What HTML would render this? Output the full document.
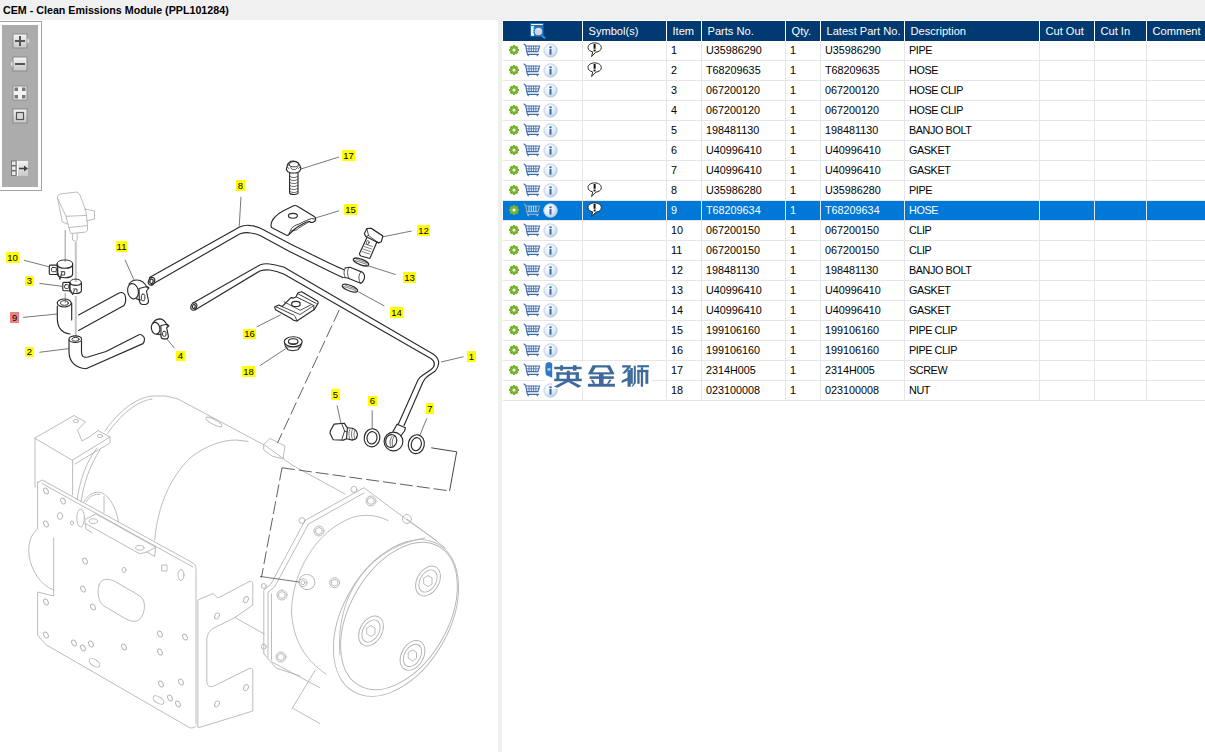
<!DOCTYPE html><html><head><meta charset="utf-8"><style>
*{margin:0;padding:0;box-sizing:border-box}
html,body{width:1205px;height:752px;overflow:hidden;background:#f0f0f0;font-family:"Liberation Sans",sans-serif}
.abs{position:absolute}
#title{position:absolute;left:3px;top:3px;font-weight:bold;font-size:10.7px;color:#000;white-space:nowrap;line-height:14px}
#left{position:absolute;left:0;top:20px;width:498px;height:732px;background:#fff;overflow:hidden}
#right{position:absolute;left:502px;top:20px;width:703px;height:732px;background:#fff;overflow:hidden}
.hd{position:absolute;top:21px;height:20px;background:#003a70;color:#fff;font-size:11.1px;line-height:20px;padding-left:5px;white-space:nowrap}
.cl{position:absolute;font-size:10.8px;line-height:19px;height:19px;padding-left:5px;white-space:nowrap;color:#000}
.hl{position:absolute;height:1px;background:#e6e6e6}
.vl{position:absolute;width:1px;background:#e6e6e6}
.ic{position:absolute}
</style></head><body>
<svg width="0" height="0" style="position:absolute"><defs>
<g id="gear"><path d="M9.48 4.73 L11.01 5.03 L11.01 6.97 L9.48 7.27 L9.35 7.56 L10.23 8.85 L8.85 10.23 L7.56 9.35 L7.27 9.48 L6.97 11.01 L5.03 11.01 L4.73 9.48 L4.44 9.35 L3.15 10.23 L1.77 8.85 L2.65 7.56 L2.52 7.27 L0.99 6.97 L0.99 5.03 L2.52 4.73 L2.65 4.44 L1.77 3.15 L3.15 1.77 L4.44 2.65 L4.73 2.52 L5.03 0.99 L6.97 0.99 L7.27 2.52 L7.56 2.65 L8.85 1.77 L10.23 3.15 L9.35 4.44 Z" fill="#79b22e"/><circle cx="6" cy="6" r="3.9" fill="#79b22e"/><circle cx="6" cy="6" r="1.5" fill="#fff"/></g>
<linearGradient id="ig" x1="0" y1="0" x2="1" y2="1"><stop offset="0" stop-color="#ffffff"/><stop offset="1" stop-color="#a9c4e0"/></linearGradient>
<radialGradient id="ig2" cx="0.35" cy="0.3" r="0.8"><stop offset="0" stop-color="#ffffff"/><stop offset="0.6" stop-color="#dfe9f4"/><stop offset="1" stop-color="#a8c4e2"/></radialGradient>
<g id="info"><circle cx="7.5" cy="7.5" r="7" fill="url(#ig2)"/><circle cx="7.5" cy="7.5" r="6.6" fill="none" stroke="#b9d0e8" stroke-width="0.8"/>
<rect x="6.4" y="3.4" width="2.2" height="1.8" fill="#3a65a6"/><rect x="6.5" y="6" width="2" height="5.6" fill="#3a65a6"/></g>
<g id="cart" fill="none" stroke="#3f6ea8" stroke-width="1.1" stroke-linecap="round" stroke-linejoin="round">
<path d="M1 1 L2.6 2.2 L4.4 11.4 L15.5 11.4"/><path d="M2.8 3 L16.5 3 L15 8.6 L3.9 8.6"/>
<path d="M3.3 5.8 L15.8 5.8" stroke-width="0.8"/>
<path d="M6 3.3V8.3M8.3 3.3V8.3M10.6 3.3V8.3M12.9 3.3V8.3" stroke-width="0.9"/>
<circle cx="5.2" cy="12.6" r="0.8" fill="#2f8ae0" stroke="none"/><circle cx="14.3" cy="12.6" r="0.8" fill="#2f8ae0" stroke="none"/></g>
<g id="cart2" fill="none" stroke="#9aa6b4" stroke-width="1.1" stroke-linecap="round" stroke-linejoin="round">
<path d="M1 1 L2.6 2.2 L4.4 11.4 L15.5 11.4"/><path d="M2.8 3 L16.5 3 L15 8.6 L3.9 8.6"/>
<path d="M6 3.3V8.3M8.3 3.3V8.3M10.6 3.3V8.3M12.9 3.3V8.3" stroke="#e8eef4" stroke-width="0.9"/>
<circle cx="5.2" cy="12.6" r="0.8" fill="#9fd0ff" stroke="none"/><circle cx="14.3" cy="12.6" r="0.8" fill="#9fd0ff" stroke="none"/></g>
<g id="bub"><path d="M7.6 0.9 C11.5 0.9 14.3 2.9 14.3 5.6 C14.3 8.1 12 9.9 8.8 10.2 L4.6 14.6 L5.7 9.9 C3 9.3 1 7.7 1 5.6 C1 2.9 3.7 0.9 7.6 0.9 Z" fill="#fff" stroke="#2a2a20" stroke-width="1"/>
<rect x="6.6" y="2" width="2" height="4.8" fill="#111"/><rect x="6.6" y="7.6" width="2" height="1.8" fill="#111"/></g>
</defs></svg>
<div id="title">CEM - Clean Emissions Module (PPL101284)</div>
<div id="left">
<svg style="position:absolute;left:0;top:-20px" width="498" height="752" viewBox="0 0 498 752">
<!-- ===== housing (light gray) ===== -->
<g fill="none" stroke="#b4b4b4" stroke-width="0.9" stroke-linejoin="round" stroke-linecap="round">
 <!-- bracket top -->
 <path d="M35 438 L74 415.5 L85.5 422 L77.5 430 L82 441 L90 436.5 L98 430.5 L110 437 L72.6 460 Z"/>
 <path d="M35 438 L35 487 M72.6 460 L72.6 495 M110 437 L110 443 L75 464"/>
 <ellipse cx="76" cy="421" rx="2.6" ry="1.6"/><ellipse cx="100" cy="436" rx="2.6" ry="1.6"/>
 <!-- cylinder top / outline -->
 <path d="M105 431 C118 412 135 398 152 396 L166 396 L178 399 L266 446 L292 465 L345 494"/>
 <path d="M108 433 C120 415 137 401 152 399"/>
 <path d="M77 500 C80 480 86 462 97 448"/>
 <path d="M81 502 C84 482 90 465 100 450"/>
 <ellipse cx="214" cy="422" rx="9" ry="2.5" transform="rotate(28 214 422)"/>
 <!-- cylinder front rim -->
 <path d="M154.6 540 C158 505 170 478 190 458 C205 446 222 440 236 440 L248 441.4"/>
 <!-- fitting block on cylinder -->
 <path d="M264 444 L270 438.5 L285 446 L283 459 L272 456 L264 450 Z"/>
 <!-- plate -->
 <path d="M37.5 482.5 L42.3 480 L193 563 C196 565 196 568 196 570 L196 724"/>
 <path d="M37.6 482 L37.6 529 C30 535 28 545 29 555 C31 570 40 585 53.7 590 L53.7 596 L37.6 592 L37.6 635.4 L46 644.7 L189.3 727.5 C191.5 728.5 194 728 196 726"/>
 <path d="M53.7 538 L53.7 590"/>
 <path d="M99 585 C101 578 108 578 116 582 L140 596 C146 600 146 612 140 619 C137 622 132 622 126 619 L104 606 C98 602 97 592 99 585 Z"/>
 <path d="M85.3 519.5 L95.9 513.9 L155.8 547.2 L147 552 L139.8 553.8 L85.3 523.5 Z"/>
 <path d="M85.5 523.5 L86 529 L92 532.5 M147 552 L154.5 556.5 L155.8 547.2"/>
 <ellipse cx="93.3" cy="521.2" rx="4.2" ry="2.4"/><ellipse cx="139.8" cy="547.8" rx="4.2" ry="2.4"/>
 <path d="M42 483.5 L193 567"/>
 <ellipse cx="80.6" cy="518" rx="3.8" ry="9"/>
 <!-- plate holes -->
 <g>
 <ellipse cx="46" cy="491" rx="2.1" ry="3.2" transform="rotate(-28 46 491)"/><ellipse cx="63" cy="501" rx="2.1" ry="3.2" transform="rotate(-28 63 501)"/>
 <ellipse cx="60" cy="516" rx="2.6" ry="3.5"/><ellipse cx="46" cy="524" rx="2.1" ry="3.2" transform="rotate(-28 46 524)"/><ellipse cx="72" cy="523" rx="1.5" ry="2"/>
 <ellipse cx="85" cy="561" rx="2.1" ry="3.2" transform="rotate(-28 85 561)"/><ellipse cx="83" cy="589" rx="2.1" ry="3.2" transform="rotate(-28 83 589)"/><ellipse cx="93" cy="607" rx="2.1" ry="3.2" transform="rotate(-28 93 607)"/>
 <ellipse cx="46" cy="602" rx="2.1" ry="3.2" transform="rotate(-28 46 602)"/><ellipse cx="46" cy="635" rx="2.1" ry="3.2" transform="rotate(-28 46 635)"/>
 <ellipse cx="74" cy="643" rx="2.1" ry="3.2" transform="rotate(-28 74 643)"/><ellipse cx="83" cy="648" rx="2.1" ry="3.2" transform="rotate(-28 83 648)"/><ellipse cx="91" cy="644" rx="2.1" ry="3.2" transform="rotate(-28 91 644)"/>
 <ellipse cx="94.5" cy="662.8" rx="3.2" ry="6" transform="rotate(-58 94.5 662.8)"/>
 <ellipse cx="124" cy="647" rx="2.1" ry="3.2" transform="rotate(-28 124 647)"/><ellipse cx="160" cy="634" rx="2.1" ry="3.2" transform="rotate(-28 160 634)"/><ellipse cx="160" cy="652" rx="2.1" ry="3.2" transform="rotate(-28 160 652)"/>
 <ellipse cx="185" cy="637" rx="2.1" ry="3.2" transform="rotate(-28 185 637)"/><ellipse cx="161" cy="684" rx="2.1" ry="3.2" transform="rotate(-28 161 684)"/><ellipse cx="181" cy="682" rx="2.1" ry="3.2" transform="rotate(-28 181 682)"/>
 <ellipse cx="158.5" cy="700" rx="3.2" ry="6" transform="rotate(-58 158.5 700)"/><ellipse cx="170" cy="698" rx="2.1" ry="3.2" transform="rotate(-28 170 698)"/><ellipse cx="178" cy="704" rx="2.1" ry="3.2" transform="rotate(-28 178 704)"/>
 <ellipse cx="124" cy="570" rx="2" ry="2.6"/><rect x="162" y="565" width="5" height="6"/><ellipse cx="181" cy="575" rx="3" ry="5.5"/>
 
 </g>
 <!-- right bracket -->
 <path d="M197.9 727 L197.9 600 L213 593.5 L218 598 L249 581.7 C251 580.5 252.8 581.5 252.8 584 L252.8 605 L235 617.5 L213 628.5 C208 632 206.8 636 206.8 641 L206.8 681 C207 686 210 688 214 686 L249 668.6 C251 667.5 252.8 668.5 252.8 671 L252.8 711 L201 727 Z"/>
 <ellipse cx="246" cy="599.6" rx="2.2" ry="3.2" transform="rotate(25 246 599.6)"/><ellipse cx="217" cy="616" rx="2.2" ry="3.2" transform="rotate(25 217 616)"/>
 <ellipse cx="246" cy="687.7" rx="2.2" ry="3.2" transform="rotate(25 246 687.7)"/><ellipse cx="217" cy="704" rx="2.2" ry="3.2" transform="rotate(25 217 704)"/>
 <path d="M235 617.5 L264.3 634"/>
 <!-- motor hub behind plate -->
 <path d="M84 502 C88 494 95 491 101 492.6 C110 496 116 508 118.5 521.9"/><path d="M104 496.6 L104 512.6"/>
 <path d="M86.5 501.5 C90 495.5 95.5 493.5 100 494.5"/>
 <!-- flange plate -->
 <path d="M263.8 653.6 L263.8 590 L270.7 584.5 L305 520.5 L364 487.7 L405.6 518.8 L436.7 541"/>
 <path d="M268 657 L268 592 L274.5 587 L308.5 524 L364 493"/>
 <path d="M271.5 660 L271.5 594"/>
 <path d="M263.8 653.6 L276 668 L300 676"/>
 <!-- cylinder back -->
 <path d="M291.5 612 C291.5 575 315 530 353.7 517 C370 513 380 517 388 520.5"/>
 <path d="M291.5 612 C293 640 305 660 326 674"/>
 <path d="M407 519 L436.7 541 L445 548"/>
 <!-- end disc -->
 <ellipse cx="396" cy="618" rx="53" ry="85" transform="rotate(30 396 618)"/>
 <ellipse cx="399" cy="616" rx="49" ry="80" transform="rotate(30 399 616)"/>
 <path d="M340 655 C335 600 365 548 425 538"/>
 <!-- bolt heads on flange -->
 <g>
 <circle cx="371" cy="501" r="5"/><path d="M368 499 L371 497.5 L374 499 L374 503 L371 504.5 L368 503 Z"/>
 <circle cx="319" cy="531" r="5"/><path d="M316 529 L319 527.5 L322 529 L322 533 L319 534.5 L316 533 Z"/>
 <circle cx="282" cy="595" r="5"/><path d="M279 593 L282 591.5 L285 593 L285 597 L282 598.5 L279 597 Z"/>
 <circle cx="281" cy="657" r="5"/><path d="M278 655 L281 653.5 L284 655 L284 659 L281 660.5 L278 659 Z"/>
 <circle cx="407" cy="519" r="4.5"/><circle cx="334.7" cy="582.7" r="5"/><path d="M331.7 580.7 L334.7 579.2 L337.7 580.7 L337.7 584.7 L334.7 586.2 L331.7 584.7 Z"/>
 <ellipse cx="307" cy="582" rx="8" ry="7.5" transform="rotate(25 307 582)"/><circle cx="303" cy="582.7" r="4"/><circle cx="303" cy="582.7" r="2"/>
 <circle cx="354" cy="489.4" r="3"/><circle cx="302" cy="520.5" r="3"/><circle cx="263.8" cy="586" r="2.5"/><circle cx="263.8" cy="646.7" r="2.5"/>
 </g>
 <!-- nuts on disc -->
 <g>
 <ellipse cx="428" cy="581" rx="11" ry="16" transform="rotate(30 428 581)"/><ellipse cx="428" cy="581" rx="8" ry="12" transform="rotate(30 428 581)"/><path d="M424 578 L428 575.5 L432 578 L432 584 L428 586.5 L424 584 Z"/>
 <ellipse cx="371" cy="631" rx="11" ry="16" transform="rotate(30 371 631)"/><ellipse cx="371" cy="631" rx="8" ry="12" transform="rotate(30 371 631)"/><path d="M367 628 L371 625.5 L375 628 L375 634 L371 636.5 L367 634 Z"/>
 <ellipse cx="412.5" cy="655.4" rx="11" ry="16" transform="rotate(30 412.5 655.4)"/><ellipse cx="412.5" cy="655.4" rx="8" ry="12" transform="rotate(30 412.5 655.4)"/><path d="M408.5 652.4 L412.5 649.9 L416.5 652.4 L416.5 658.4 L412.5 660.9 L408.5 658.4 Z"/>
 </g>
 <!-- foot -->
 <path d="M292.4 708 L315.4 670 M292.4 708 L319.7 723.5 M272 662 L319.7 687.7"/>
 
 <!-- sensor -->
 <path d="M57.7 196 L60 194 L77 192 L80 195 L85.6 210 L86.5 215.4 L66 216.3 L57.7 198.6 Z"/>
 <path d="M57.7 198.6 L62.3 222 L68 224.2 L66 216.3"/>
 <path d="M86.5 215.4 L87.5 225.6 L68.9 227.5 L68 224.2"/>
 <path d="M68.9 227.5 L70.7 233.5 L85.6 232.1 L87.5 230.3 L87.5 225.6"/>
 <path d="M72.6 233.5 L72.6 240 L75.8 241.5 L77.2 240 L77.2 233.5"/>
 <path d="M84.7 209 L94.5 211 L94.5 219 L86.5 221"/>
</g>
<!-- rods -->
<g fill="none" stroke-linecap="butt">
 <path d="M65.2 230 L65.2 262" stroke="#999" stroke-width="1"/>
 <path d="M65.2 293 L65.2 303" stroke="#999" stroke-width="1"/>
 <path d="M75.8 242 L75.8 282 M75.8 296 L75.8 338" stroke="#c6c6c6" stroke-width="2"/>
</g>
<!-- ===== parts (dark) ===== -->
<g fill="none" stroke="#2a2a2a" stroke-width="1.15" stroke-linejoin="round" stroke-linecap="round">
 <!-- hose 9 -->
 <path d="M57.3 306 L57.3 318 C57.3 328 62 333 70 334"/>
 <ellipse cx="64.2" cy="303" rx="7" ry="4"/><ellipse cx="64.4" cy="303" rx="4" ry="2.4" stroke-width="0.9"/>
 <path d="M71.7 303 L71.7 320"/>
 <path d="M78.6 315 L118.6 293.3 C122 291.5 125 293 125.5 297 C126 301 125 304 124 305.4 L78.6 330.5"/>
 <!-- hose 2 -->
 <ellipse cx="75.3" cy="339.2" rx="6.3" ry="3.3"/><ellipse cx="75.5" cy="339.3" rx="3.6" ry="1.9" stroke-width="0.9"/>
 <path d="M69 340 L69 352 C69 362 76 368 86 368.7 L143 343.6 C145 341 145 337 142.9 336 C141 334 139 334.5 138 335.2 L106 351.5 L88 357 C83 358 81.5 356 81.5 352 L81.5 341"/>
 <!-- clip 10 -->
 <path d="M57.2 263.5 C57.2 261 61 260 65 260 C69 260 72.6 261 72.6 263.5" stroke-width="1"/>
 <path d="M57.2 265 C58 267.5 61.5 268.2 65 268.2 C68.5 268.2 72 267.5 72.6 265"/>
 <path d="M57.2 263.5 L57.2 274.5 C58.5 277 62 277.7 65 277.7 C68.5 277.7 72 277 72.6 274.5 L72.6 263.5"/>
 <path d="M50.3 265.1 L57.7 265.1 L57.7 274.5 L50.3 274.5 C49.5 274.5 49.3 274 49.3 273 L49.3 266.5 C49.3 265.5 49.7 265.1 50.3 265.1 Z"/>
 <rect x="51.6" y="267.5" width="4.7" height="4.2" rx="1" stroke-width="0.9"/>
 <path d="M57.7 272.6 L60 279.6 L61.9 272.1 M61 271.7 L64.7 271.7 L64.7 275 L61 275" stroke-width="0.9"/>
 <!-- clip 3 -->
 <path d="M69.8 282.5 C69.8 280.5 72.5 279.1 75.6 279.1 C78.7 279.1 81.4 280.5 81.4 282.5" stroke-width="1"/>
 <path d="M69.8 283.2 C71 284.8 73.5 285.3 75.6 285.3 C78 285.3 80.5 284.8 81.4 283.2"/>
 <path d="M69.8 282.5 L69.8 291 C71 293 73.5 293.5 75.6 293.5 C78 293.5 80.5 293 81.4 291 L81.4 282.5"/>
 <path d="M63.8 282.4 L69.8 282.4 L69.8 290.7 L63.8 290.7 C63.2 290.7 62.8 290.2 62.8 289.5 L62.8 283.5 C62.8 282.8 63.2 282.4 63.8 282.4 Z"/>
 <rect x="64.6" y="284.7" width="4.2" height="3.7" rx="1" stroke-width="0.9"/>
 <path d="M70.7 290 L72.6 295 L74.5 290 M73.5 289 L77 289 L77 292" stroke-width="0.9"/>
 <!-- clip 11 -->
 <ellipse cx="133" cy="291.2" rx="5.3" ry="7.7" transform="rotate(-12 133 291.2)"/>
 <path d="M129 284 C131 281 134 280 137 280 C141 280 145 283 147.5 288"/>
 <path d="M136 298.5 C138 299.5 139.5 300 140.5 300"/>
 <path d="M139 288.5 L147 286.5 L149 288 L146.5 291 L148.5 301 C148.5 303 147.5 304 145.5 304.5 L142.5 304.5 C140.5 304 139.3 302 139.3 300 Z"/>
 <rect x="141.4" y="294.2" width="3.4" height="6.6" rx="1.5" stroke-width="0.9"/>
 <!-- clip 4 -->
 <ellipse cx="155.6" cy="328.3" rx="4.2" ry="6" transform="rotate(-12 155.6 328.3)"/>
 <path d="M153 322.8 C155 320 158 318.9 160 318.9 C163 319 165.5 321.5 167.4 325.8"/>
 <path d="M157 333.7 C158 334.3 159.5 334.6 160.9 334.6"/>
 <path d="M160.9 325.5 L167.4 324.3 L168.9 325.8 L166.7 327.8 L168.4 336.3 C168.4 338 167.5 338.8 166 338.8 L163.4 338.8 C162 338.8 161 337.5 161 336 Z"/>
 <rect x="162.6" y="331.3" width="3.4" height="5" rx="1.3" stroke-width="0.9"/>
 <!-- pipe 8 -->
 <path d="M149.5 277.5 L239.6 227 C244 225 248 225 251 225.6 C255 226 258 227 261 228.5 L290 243.7 C315 256 330 264 343.9 269.7"/>
 <path d="M151 285 L239.6 234 C244 232.5 248 232.5 251 233 C255 233.5 258 234.5 261 236 L290 251.7 C315 264 330 272 343 277.6"/>
 <ellipse cx="151.5" cy="281.3" rx="3" ry="4" transform="rotate(20 151.5 281.3)"/>
 <ellipse cx="151.5" cy="281.3" rx="1.6" ry="2.2" transform="rotate(20 151.5 281.3)"/>
 <!-- pipe 8 end fitting -->
 <path d="M345 268 L349.9 267.3 L362.1 272.1 C364.5 273.5 365 277 364.3 278.5 C363.5 281 362 283 360.5 283.3 L347.8 278 L344 277.5"/>
 <path d="M345.5 268 C343.5 270 343.5 275 345.5 277.6" stroke-width="0.8"/>
 <path d="M349 267.5 C347 270 347 275 349 278.2" stroke-width="0.8"/>
 <path d="M361 272 C358.5 274 358 279.5 360.5 283.3" stroke-width="0.8"/>
 <!-- pipe 1 -->
 <path d="M193 303 L259.8 265 C263 263.8 267 263.5 270 264 C274 264.5 278 265.5 283.7 267 L433 354 C439 358 441 364 435.3 371 L428 376 C425 378 424 380 423 382 L404 425.5"/>
 <path d="M195 310 L259.8 271 C263 270 267 269.7 270 270 C274 270.5 278 271.5 283.7 274 L430.8 358.5 C435 361 436 366 430.8 369.8 L423 375 C420 377 419 378 418 380 L398 424.7"/>
 <ellipse cx="193.8" cy="306.5" rx="2.8" ry="3.8" transform="rotate(20 193.8 306.5)"/>
 <ellipse cx="193.8" cy="306.5" rx="1.4" ry="2" transform="rotate(20 193.8 306.5)"/>
 <!-- banjo eye -->
 <path d="M397.1 424.3 L405.4 427.8 L404.5 431 L400.8 436"/>
 <path d="M397.1 424.3 L393 431.4"/>
 <ellipse cx="393.5" cy="441.5" rx="9.4" ry="9.4"/>
 <ellipse cx="391.2" cy="441" rx="5.5" ry="6.5" transform="rotate(15 391.2 441)"/>
 <path d="M394.5 436 C392 439 391.5 444 393 447 M392 436.5 C389.5 440 389.5 444 391 446.5" stroke-width="0.7"/>
 <!-- gaskets 6,7 -->
 <ellipse cx="372" cy="437.8" rx="7.8" ry="9.1" transform="rotate(10 372 437.8)"/>
 <ellipse cx="372" cy="437.8" rx="5" ry="6.2" transform="rotate(10 372 437.8)"/>
 <ellipse cx="416.3" cy="444.2" rx="8" ry="9.5" transform="rotate(12 416.3 444.2)"/>
 <ellipse cx="416.3" cy="444.2" rx="5" ry="6.6" transform="rotate(12 416.3 444.2)"/>
 <!-- bolt 5 -->
 <path d="M330.5 430.5 L334.1 424.1 L344.2 423.2 L347.4 427.8 L346.5 438.7 L343.3 440.1 L333.2 439.7 L330 433.3 Z"/>
 <path d="M341.9 424.1 L344.6 431 L341.9 439.2 M344.6 431 L347.2 432" stroke-width="0.9"/>
 <path d="M347.4 427.8 L352.4 428.2 C355 429 357 431.5 357.4 434.2 C357.4 436.5 356.5 438 356 438.7 L352.4 440.1 L346.5 438.7"/>
 <path d="M350 429 C348.5 432 348.5 436 350 439.5 M352.5 429 C351 432 351 436 352.5 439.6 M355 430 C353.5 432.5 353.5 436 355 439" stroke-width="0.6"/>
 <!-- bolt 17 -->
 <path d="M286.6 168.2 L287.8 164 L290.5 161.3 L293.8 161 L298 162.5 L300 165.8 L301 168.8 L299.2 171.8 L296.2 173 L290.8 173 L287.8 171.8 L286.3 169.4 Z"/>
 <path d="M289 165 C289.5 162.5 292 161.6 294 161.6 C296.5 161.6 298.6 163 298.6 165 C298 166.5 296 166.8 294 166.8 C292 166.8 289.5 166.5 289 165 Z" stroke-width="0.9"/>
 <path d="M290.5 167 L292 169.4 L295.6 169.4 L298 167 M287.5 167.5 L289 168.5 M299.5 167.5 L298.5 168.5" stroke-width="0.7"/>
 <path d="M289.6 173 L289.6 193 C290.5 195 297 195 298 193 L298 173"/>
 <path d="M290 176.5 C292 178 295.5 178 297.5 176.5 M290 179.5 C292 181 295.5 181 297.5 179.5 M290 182.5 C292 184 295.5 184 297.5 182.5 M290 185.5 C292 187 295.5 187 297.5 185.5 M290 188.5 C292 190 295.5 190 297.5 188.5 M290 191.5 C292 193 295.5 193 297.5 191.5" stroke-width="0.7"/>
 <!-- clip 15 -->
 <path d="M271 226 C271 222 273 219 275 217 C277 214.5 280 212.5 283 211 L293.6 205.8 C295 205.2 296 205.5 297 206 L314.2 216.5 C316 217.5 316 220 315 221 L313.5 222 C312 222.8 310.5 222.5 309.5 221.5 L306.5 222 L298.2 226.5 C295 228.5 293 230.5 291.6 232 L289 234.5 C288 235.5 287 235.5 286 235 L271.5 227.5 Z"/>
 <path d="M289 233.7 L291.6 228.4 C293 226.5 295.5 225 298.2 224.4 L306.2 220.5 L311.5 218.5 L315 219" stroke-width="0.9"/>
 <path d="M291.6 231 L296.9 229.8 L298.2 228.4 L303.5 225.1 L309.5 221.5" stroke-width="0.8"/>
 <ellipse cx="292.9" cy="215.8" rx="4.5" ry="2.4"/>
 <!-- bolt 12 -->
 <path d="M364.3 233.8 L366.9 228.5 L371.2 228.3 L382.9 236 L381.3 241.8 L378.6 242.9 L365.9 236.5 Z"/>
 <path d="M366.9 228.5 L368.5 235.5 M371.2 228.3 L382.9 236 M368.5 235.5 L378.6 242.9 M368.5 235.5 L366 236.5" stroke-width="0.8"/>
 <path d="M366.9 237.6 L359.5 253.5 C359.5 255 360 255.5 361 256 L369 258.3 C370 258.5 370.5 257.5 370.6 256.7 L377 241.8"/>
 <path d="M365 244 L372.5 246.5 M364 246.5 L371.5 249 M363 249 L370.5 251.5 M362 251.5 L369.5 254" stroke-width="0.6"/>
 <ellipse cx="367.8" cy="242.5" rx="1.3" ry="2" stroke-width="0.7"/>
 <!-- gaskets 13, 14 -->
 <ellipse cx="361" cy="262" rx="8.2" ry="2.8" transform="rotate(21 361 262)"/>
 <path d="M355 260.5 L367 264.5 M356.5 259.3 L367 263" stroke-width="0.6"/>
 <ellipse cx="349.9" cy="288.1" rx="8.2" ry="2.8" transform="rotate(21 349.9 288.1)"/>
 <path d="M344 286.5 L356 290.5 M345.5 285.3 L356 289" stroke-width="0.6"/>
 <!-- clip 16 -->
 <path d="M274.6 307.1 L278.8 305 L282 306.6 L291 297.6 L293.7 298.1 L295.9 297 L298 292.8 L301.7 291.7 L317.7 301.3 L318.2 302.9 L316.1 306.6 L313.9 309.8 L296.9 321 L293.7 320.4 L291.6 318.8 L275.6 309.8 Z"/>
 <path d="M275.6 306.6 L293.7 315.1 L295.3 316.7 L296.9 321" stroke-width="0.9"/>
 <path d="M298 293.8 L316.1 303.4 M296.5 297 L313.9 305.5 L313.9 309.8" stroke-width="0.9"/>
 <path d="M282 306.6 L300.1 314.5 L313.9 305.5 M284.1 301.8 L300.1 310.3 L310.7 305" stroke-width="0.8"/>
 <ellipse cx="295.9" cy="303.9" rx="4.3" ry="2.6"/>
 <!-- nut 18 -->
 <ellipse cx="293.2" cy="341.7" rx="9" ry="5"/>
 <ellipse cx="293.2" cy="341.5" rx="4.8" ry="2.8"/>
 <path d="M289 343 C290 344 296 344 297.5 343" stroke-width="0.7"/>
 <path d="M284.8 343.5 L285.2 346 L287.9 349.7 L292.7 350.7 L298 349.7 L300.6 346.5 L301.5 343.5"/>
 <path d="M286 347 L300 347" stroke-width="0.7"/>
</g>
<!-- leaders -->
<g fill="none" stroke="#555" stroke-width="0.8">
 <path d="M24 260.3 L50 267"/><path d="M39.4 283.4 L63 286.4"/><path d="M23 317.4 L57.3 314"/>
 <path d="M39.4 352.3 L69 348.6"/><path d="M125 259.8 L134.5 281"/><path d="M166 338 L174.5 348.2"/>
 <path d="M241 196.8 L239.2 226.6"/><path d="M301 169 L338.9 157"/><path d="M316 217.8 L339 210.8"/>
 <path d="M382.8 236.8 L411.7 231"/><path d="M367.8 265.7 L395.7 274.6"/><path d="M358.4 291.8 L384.4 306"/>
 <path d="M256.8 326.8 L280.7 314.8"/><path d="M259.8 365.7 L285.7 348.7"/><path d="M441 362 L463.6 356.7"/>
 <path d="M337.1 405.5 L341.1 423.9"/><path d="M372.2 410.3 L372.2 428.6"/><path d="M426.8 418.3 L420 435"/>
 <path d="M260 576.4 L299 582"/>
</g>
<!-- dashed -->
<g fill="none" stroke="#444" stroke-width="0.85" stroke-dasharray="13 4">
 <path d="M339.2 310 L277.5 443"/>
 <path d="M282 467.8 L261.4 577.5"/>
 <path d="M282 467.8 L449.6 490.9"/>
</g>
<g fill="none" stroke="#333" stroke-width="0.9">
 <path d="M431.2 447.8 L456.7 451.8 L449.6 490.9"/>
</g>
<!-- labels -->
<g font-family="Liberation Sans, sans-serif" font-size="9.5" text-anchor="middle">
 <rect x="6" y="252" width="13" height="11" fill="#ffff00"/><text x="12.5" y="260.5">10</text>
 <rect x="25" y="276" width="9" height="10" fill="#ffff00"/><text x="29.5" y="284">3</text>
 <rect x="10" y="312" width="9" height="11" fill="#f08080"/><text x="14.5" y="320.5" transform="rotate(180 14.5 317.5)">6</text>
 <rect x="25" y="347" width="9" height="10" fill="#ffff00"/><text x="29.5" y="355">2</text>
 <rect x="116" y="241" width="11" height="11" fill="#ffff00"/><text x="121.5" y="249.5">11</text>
 <rect x="176" y="351" width="9" height="10" fill="#ffff00"/><text x="180.5" y="359">4</text>
 <rect x="236" y="180" width="9" height="11" fill="#ffff00"/><text x="240.5" y="188.5">8</text>
 <rect x="342" y="150" width="13" height="11" fill="#ffff00"/><text x="348.5" y="158.5">17</text>
 <rect x="344" y="204" width="13" height="11" fill="#ffff00"/><text x="350.5" y="212.5">15</text>
 <rect x="417" y="225" width="13" height="11" fill="#ffff00"/><text x="423.5" y="233.5">12</text>
 <rect x="403" y="272" width="13" height="11" fill="#ffff00"/><text x="409.5" y="280.5">13</text>
 <rect x="390" y="307" width="13" height="11" fill="#ffff00"/><text x="396.5" y="315.5">14</text>
 <rect x="243" y="329" width="13" height="10" fill="#ffff00"/><text x="249.5" y="337">16</text>
 <rect x="242" y="366" width="13" height="11" fill="#ffff00"/><text x="248.5" y="374.5">18</text>
 <rect x="467" y="351" width="9" height="11" fill="#ffff00"/><text x="471.5" y="359.5">1</text>
 <rect x="331" y="389" width="9" height="11" fill="#ffff00"/><text x="335.5" y="397.5">5</text>
 <rect x="368" y="396" width="9" height="10" fill="#ffff00"/><text x="372.5" y="404">6</text>
 <rect x="426" y="403" width="8" height="11" fill="#ffff00"/><text x="430" y="411.5">7</text>
</g>
</svg>
<!-- toolbar -->
<svg style="position:absolute;left:0;top:-20px" width="44" height="200" viewBox="0 0 44 200">
<defs><linearGradient id="bg1" x1="0" y1="0" x2="0" y2="1"><stop offset="0" stop-color="#f4f4f4"/><stop offset="1" stop-color="#c8c8c8"/></linearGradient></defs>
<rect x="-1" y="21.5" width="42.5" height="169" fill="#fff" stroke="#a3a3a3" stroke-width="1"/>
<rect x="2" y="25" width="36" height="162" fill="#acacac"/>
<g>
 <rect x="12.5" y="33.5" width="15" height="15" fill="#8a8a8a"/>
 <rect x="13.5" y="34.5" width="13" height="13" fill="url(#bg1)"/>
 <path d="M27.5 38 L29.5 41 L27.5 44 Z" fill="#e8e8e8"/>
 <rect x="15" y="40" width="10" height="2" fill="#555"/><rect x="19" y="36" width="2" height="10" fill="#555"/>
 <rect x="12.5" y="56.5" width="15" height="15" fill="#8a8a8a"/>
 <rect x="13.5" y="57.5" width="13" height="13" fill="url(#bg1)"/>
 <path d="M12.5 61 L10.5 64 L12.5 67 Z" fill="#e8e8e8"/>
 <rect x="15" y="63" width="10" height="2" fill="#555"/>
 <rect x="12.5" y="85.5" width="15" height="15" fill="#8a8a8a"/>
 <rect x="13.5" y="86.5" width="13" height="13" fill="#f2f2f2"/>
 <rect x="14.5" y="87.5" width="3.5" height="3.5" fill="#777"/><rect x="22" y="87.5" width="3.5" height="3.5" fill="#777"/>
 <rect x="14.5" y="95" width="3.5" height="3.5" fill="#777"/><rect x="22" y="95" width="3.5" height="3.5" fill="#777"/>
 <rect x="12.5" y="108.5" width="15" height="15" fill="#8a8a8a"/>
 <rect x="13.5" y="109.5" width="13" height="13" fill="url(#bg1)"/>
 <rect x="16.5" y="112.5" width="7" height="7" fill="#d8d8d8" stroke="#555" stroke-width="1.2"/>
 <rect x="11.5" y="161" width="4.5" height="4.5" fill="#e8e8e8" stroke="#666" stroke-width="0.8"/>
 <rect x="11.5" y="166" width="4.5" height="4.5" fill="#e8e8e8" stroke="#666" stroke-width="0.8"/>
 <rect x="11.5" y="171" width="4.5" height="4.5" fill="#e8e8e8" stroke="#666" stroke-width="0.8"/>
 <rect x="17" y="161" width="11" height="15" fill="url(#bg1)"/><rect x="17" y="161" width="1" height="15" fill="#fff"/>
 <path d="M19 168.5 L25 168.5" stroke="#444" stroke-width="1.6"/><path d="M24 165.5 L28 168.5 L24 171.5 Z" fill="#444"/>
</g>
</svg>

</div>
<div id="right"></div>
<div class="hd" style="left:503px;width:79px;padding:0"></div>
<div class="hd" style="left:583px;width:83px;padding-left:5.5px">Symbol(s)</div>
<div class="hd" style="left:667px;width:34px;padding-left:5.5px">Item</div>
<div class="hd" style="left:702px;width:83px;padding-left:5.5px">Parts No.</div>
<div class="hd" style="left:786px;width:34px;padding-left:5.5px">Qty.</div>
<div class="hd" style="left:821px;width:83px;padding-left:5.5px">Latest Part No.</div>
<div class="hd" style="left:905px;width:134px;padding-left:5.5px">Description</div>
<div class="hd" style="left:1040px;width:54px;padding-left:5.5px">Cut Out</div>
<div class="hd" style="left:1095px;width:51px;padding-left:5.5px">Cut In</div>
<div class="hd" style="left:1147px;width:58px;padding-left:5.5px">Comment</div>
<svg class="ic" style="left:529px;top:22px" width="18" height="18" viewBox="0 0 18 18">
<rect x="1.1" y="1" width="13.4" height="13.6" fill="#1f6fbd"/>
<rect x="2.1" y="2" width="11.8" height="1" fill="#f4f8fc"/>
<rect x="2.1" y="4.1" width="3" height="9.7" fill="#ffffff"/>
<path d="M4.8 5.5 L3.8 6 L4.8 6.6 M4.8 7.8 L3.8 8.3 L4.8 8.9 M4.8 10.1 L3.8 10.6 L4.8 11.2" stroke="#1f6fbd" stroke-width="0.6" fill="none"/>
<circle cx="9.4" cy="9.4" r="4.3" fill="#d2d5da" stroke="#2a78c8" stroke-width="1.1"/>
<path d="M8 7.5 C9 7 10.5 7.2 11 8" stroke="#fff" stroke-width="0.8" fill="none"/>
<path d="M12.3 13 L16.4 16.3" stroke="#2a7fd0" stroke-width="2.2"/>
<path d="M12.8 14.2 L15.5 16.4" stroke="#8fbfea" stroke-width="0.6" stroke-dasharray="1 1"/>
</svg>
<div class="cl" style="left:666px;top:41px;color:#000">1</div>
<div class="cl" style="left:701px;top:41px;color:#000">U35986290</div>
<div class="cl" style="left:785px;top:41px;color:#000">1</div>
<div class="cl" style="left:820px;top:41px;color:#000">U35986290</div>
<div class="cl" style="left:904px;top:41px;color:#000;letter-spacing:-0.4px">PIPE</div>
<svg class="ic" style="left:508px;top:44px" width="12" height="12" viewBox="0 0 12 12"><use href="#gear"/></svg>
<svg class="ic" style="left:523px;top:42.5px" width="18" height="14" viewBox="0 0 18 14"><use href="#cart"/></svg>
<svg class="ic" style="left:542.5px;top:42.5px" width="15" height="15" viewBox="0 0 15 15"><use href="#info"/></svg>
<svg class="ic" style="left:586.5px;top:42px" width="16" height="16" viewBox="0 0 16 16"><use href="#bub"/></svg>
<div class="hl" style="left:503px;top:60px;width:702px"></div>
<div class="cl" style="left:666px;top:61px;color:#000">2</div>
<div class="cl" style="left:701px;top:61px;color:#000">T68209635</div>
<div class="cl" style="left:785px;top:61px;color:#000">1</div>
<div class="cl" style="left:820px;top:61px;color:#000">T68209635</div>
<div class="cl" style="left:904px;top:61px;color:#000;letter-spacing:-0.4px">HOSE</div>
<svg class="ic" style="left:508px;top:64px" width="12" height="12" viewBox="0 0 12 12"><use href="#gear"/></svg>
<svg class="ic" style="left:523px;top:62.5px" width="18" height="14" viewBox="0 0 18 14"><use href="#cart"/></svg>
<svg class="ic" style="left:542.5px;top:62.5px" width="15" height="15" viewBox="0 0 15 15"><use href="#info"/></svg>
<svg class="ic" style="left:586.5px;top:62px" width="16" height="16" viewBox="0 0 16 16"><use href="#bub"/></svg>
<div class="hl" style="left:503px;top:80px;width:702px"></div>
<div class="cl" style="left:666px;top:81px;color:#000">3</div>
<div class="cl" style="left:701px;top:81px;color:#000">067200120</div>
<div class="cl" style="left:785px;top:81px;color:#000">1</div>
<div class="cl" style="left:820px;top:81px;color:#000">067200120</div>
<div class="cl" style="left:904px;top:81px;color:#000;letter-spacing:-0.4px">HOSE CLIP</div>
<svg class="ic" style="left:508px;top:84px" width="12" height="12" viewBox="0 0 12 12"><use href="#gear"/></svg>
<svg class="ic" style="left:523px;top:82.5px" width="18" height="14" viewBox="0 0 18 14"><use href="#cart"/></svg>
<svg class="ic" style="left:542.5px;top:82.5px" width="15" height="15" viewBox="0 0 15 15"><use href="#info"/></svg>
<div class="hl" style="left:503px;top:100px;width:702px"></div>
<div class="cl" style="left:666px;top:101px;color:#000">4</div>
<div class="cl" style="left:701px;top:101px;color:#000">067200120</div>
<div class="cl" style="left:785px;top:101px;color:#000">1</div>
<div class="cl" style="left:820px;top:101px;color:#000">067200120</div>
<div class="cl" style="left:904px;top:101px;color:#000;letter-spacing:-0.4px">HOSE CLIP</div>
<svg class="ic" style="left:508px;top:104px" width="12" height="12" viewBox="0 0 12 12"><use href="#gear"/></svg>
<svg class="ic" style="left:523px;top:102.5px" width="18" height="14" viewBox="0 0 18 14"><use href="#cart"/></svg>
<svg class="ic" style="left:542.5px;top:102.5px" width="15" height="15" viewBox="0 0 15 15"><use href="#info"/></svg>
<div class="hl" style="left:503px;top:120px;width:702px"></div>
<div class="cl" style="left:666px;top:121px;color:#000">5</div>
<div class="cl" style="left:701px;top:121px;color:#000">198481130</div>
<div class="cl" style="left:785px;top:121px;color:#000">1</div>
<div class="cl" style="left:820px;top:121px;color:#000">198481130</div>
<div class="cl" style="left:904px;top:121px;color:#000;letter-spacing:-0.4px">BANJO BOLT</div>
<svg class="ic" style="left:508px;top:124px" width="12" height="12" viewBox="0 0 12 12"><use href="#gear"/></svg>
<svg class="ic" style="left:523px;top:122.5px" width="18" height="14" viewBox="0 0 18 14"><use href="#cart"/></svg>
<svg class="ic" style="left:542.5px;top:122.5px" width="15" height="15" viewBox="0 0 15 15"><use href="#info"/></svg>
<div class="hl" style="left:503px;top:140px;width:702px"></div>
<div class="cl" style="left:666px;top:141px;color:#000">6</div>
<div class="cl" style="left:701px;top:141px;color:#000">U40996410</div>
<div class="cl" style="left:785px;top:141px;color:#000">1</div>
<div class="cl" style="left:820px;top:141px;color:#000">U40996410</div>
<div class="cl" style="left:904px;top:141px;color:#000;letter-spacing:-0.4px">GASKET</div>
<svg class="ic" style="left:508px;top:144px" width="12" height="12" viewBox="0 0 12 12"><use href="#gear"/></svg>
<svg class="ic" style="left:523px;top:142.5px" width="18" height="14" viewBox="0 0 18 14"><use href="#cart"/></svg>
<svg class="ic" style="left:542.5px;top:142.5px" width="15" height="15" viewBox="0 0 15 15"><use href="#info"/></svg>
<div class="hl" style="left:503px;top:160px;width:702px"></div>
<div class="cl" style="left:666px;top:161px;color:#000">7</div>
<div class="cl" style="left:701px;top:161px;color:#000">U40996410</div>
<div class="cl" style="left:785px;top:161px;color:#000">1</div>
<div class="cl" style="left:820px;top:161px;color:#000">U40996410</div>
<div class="cl" style="left:904px;top:161px;color:#000;letter-spacing:-0.4px">GASKET</div>
<svg class="ic" style="left:508px;top:164px" width="12" height="12" viewBox="0 0 12 12"><use href="#gear"/></svg>
<svg class="ic" style="left:523px;top:162.5px" width="18" height="14" viewBox="0 0 18 14"><use href="#cart"/></svg>
<svg class="ic" style="left:542.5px;top:162.5px" width="15" height="15" viewBox="0 0 15 15"><use href="#info"/></svg>
<div class="hl" style="left:503px;top:180px;width:702px"></div>
<div class="cl" style="left:666px;top:181px;color:#000">8</div>
<div class="cl" style="left:701px;top:181px;color:#000">U35986280</div>
<div class="cl" style="left:785px;top:181px;color:#000">1</div>
<div class="cl" style="left:820px;top:181px;color:#000">U35986280</div>
<div class="cl" style="left:904px;top:181px;color:#000;letter-spacing:-0.4px">PIPE</div>
<svg class="ic" style="left:508px;top:184px" width="12" height="12" viewBox="0 0 12 12"><use href="#gear"/></svg>
<svg class="ic" style="left:523px;top:182.5px" width="18" height="14" viewBox="0 0 18 14"><use href="#cart"/></svg>
<svg class="ic" style="left:542.5px;top:182.5px" width="15" height="15" viewBox="0 0 15 15"><use href="#info"/></svg>
<svg class="ic" style="left:586.5px;top:182px" width="16" height="16" viewBox="0 0 16 16"><use href="#bub"/></svg>
<div class="hl" style="left:503px;top:200px;width:702px"></div>
<div class="abs" style="left:503px;top:201px;width:702px;height:19px;background:#0078d7"></div>
<div class="abs" style="left:582px;top:201px;width:1px;height:19px;background:#fff"></div>
<div class="abs" style="left:666px;top:201px;width:1px;height:19px;background:#fff"></div>
<div class="abs" style="left:701px;top:201px;width:1px;height:19px;background:#fff"></div>
<div class="abs" style="left:785px;top:201px;width:1px;height:19px;background:#fff"></div>
<div class="abs" style="left:820px;top:201px;width:1px;height:19px;background:#fff"></div>
<div class="abs" style="left:904px;top:201px;width:1px;height:19px;background:#fff"></div>
<div class="abs" style="left:1039px;top:201px;width:1px;height:19px;background:#fff"></div>
<div class="abs" style="left:1094px;top:201px;width:1px;height:19px;background:#fff"></div>
<div class="abs" style="left:1146px;top:201px;width:1px;height:19px;background:#fff"></div>
<div class="cl" style="left:666px;top:201px;color:#fff">9</div>
<div class="cl" style="left:701px;top:201px;color:#fff">T68209634</div>
<div class="cl" style="left:785px;top:201px;color:#fff">1</div>
<div class="cl" style="left:820px;top:201px;color:#fff">T68209634</div>
<div class="cl" style="left:904px;top:201px;color:#fff;letter-spacing:-0.4px">HOSE</div>
<svg class="ic" style="left:508px;top:204px" width="12" height="12" viewBox="0 0 12 12"><use href="#gear"/></svg>
<svg class="ic" style="left:523px;top:202.5px" width="18" height="14" viewBox="0 0 18 14"><use href="#cart2"/></svg>
<svg class="ic" style="left:542.5px;top:202.5px" width="15" height="15" viewBox="0 0 15 15"><use href="#info"/></svg>
<svg class="ic" style="left:586.5px;top:202px" width="16" height="16" viewBox="0 0 16 16"><use href="#bub"/></svg>
<div class="hl" style="left:503px;top:220px;width:702px"></div>
<div class="cl" style="left:666px;top:221px;color:#000">10</div>
<div class="cl" style="left:701px;top:221px;color:#000">067200150</div>
<div class="cl" style="left:785px;top:221px;color:#000">1</div>
<div class="cl" style="left:820px;top:221px;color:#000">067200150</div>
<div class="cl" style="left:904px;top:221px;color:#000;letter-spacing:-0.4px">CLIP</div>
<svg class="ic" style="left:508px;top:224px" width="12" height="12" viewBox="0 0 12 12"><use href="#gear"/></svg>
<svg class="ic" style="left:523px;top:222.5px" width="18" height="14" viewBox="0 0 18 14"><use href="#cart"/></svg>
<svg class="ic" style="left:542.5px;top:222.5px" width="15" height="15" viewBox="0 0 15 15"><use href="#info"/></svg>
<div class="hl" style="left:503px;top:240px;width:702px"></div>
<div class="cl" style="left:666px;top:241px;color:#000">11</div>
<div class="cl" style="left:701px;top:241px;color:#000">067200150</div>
<div class="cl" style="left:785px;top:241px;color:#000">1</div>
<div class="cl" style="left:820px;top:241px;color:#000">067200150</div>
<div class="cl" style="left:904px;top:241px;color:#000;letter-spacing:-0.4px">CLIP</div>
<svg class="ic" style="left:508px;top:244px" width="12" height="12" viewBox="0 0 12 12"><use href="#gear"/></svg>
<svg class="ic" style="left:523px;top:242.5px" width="18" height="14" viewBox="0 0 18 14"><use href="#cart"/></svg>
<svg class="ic" style="left:542.5px;top:242.5px" width="15" height="15" viewBox="0 0 15 15"><use href="#info"/></svg>
<div class="hl" style="left:503px;top:260px;width:702px"></div>
<div class="cl" style="left:666px;top:261px;color:#000">12</div>
<div class="cl" style="left:701px;top:261px;color:#000">198481130</div>
<div class="cl" style="left:785px;top:261px;color:#000">1</div>
<div class="cl" style="left:820px;top:261px;color:#000">198481130</div>
<div class="cl" style="left:904px;top:261px;color:#000;letter-spacing:-0.4px">BANJO BOLT</div>
<svg class="ic" style="left:508px;top:264px" width="12" height="12" viewBox="0 0 12 12"><use href="#gear"/></svg>
<svg class="ic" style="left:523px;top:262.5px" width="18" height="14" viewBox="0 0 18 14"><use href="#cart"/></svg>
<svg class="ic" style="left:542.5px;top:262.5px" width="15" height="15" viewBox="0 0 15 15"><use href="#info"/></svg>
<div class="hl" style="left:503px;top:280px;width:702px"></div>
<div class="cl" style="left:666px;top:281px;color:#000">13</div>
<div class="cl" style="left:701px;top:281px;color:#000">U40996410</div>
<div class="cl" style="left:785px;top:281px;color:#000">1</div>
<div class="cl" style="left:820px;top:281px;color:#000">U40996410</div>
<div class="cl" style="left:904px;top:281px;color:#000;letter-spacing:-0.4px">GASKET</div>
<svg class="ic" style="left:508px;top:284px" width="12" height="12" viewBox="0 0 12 12"><use href="#gear"/></svg>
<svg class="ic" style="left:523px;top:282.5px" width="18" height="14" viewBox="0 0 18 14"><use href="#cart"/></svg>
<svg class="ic" style="left:542.5px;top:282.5px" width="15" height="15" viewBox="0 0 15 15"><use href="#info"/></svg>
<div class="hl" style="left:503px;top:300px;width:702px"></div>
<div class="cl" style="left:666px;top:301px;color:#000">14</div>
<div class="cl" style="left:701px;top:301px;color:#000">U40996410</div>
<div class="cl" style="left:785px;top:301px;color:#000">1</div>
<div class="cl" style="left:820px;top:301px;color:#000">U40996410</div>
<div class="cl" style="left:904px;top:301px;color:#000;letter-spacing:-0.4px">GASKET</div>
<svg class="ic" style="left:508px;top:304px" width="12" height="12" viewBox="0 0 12 12"><use href="#gear"/></svg>
<svg class="ic" style="left:523px;top:302.5px" width="18" height="14" viewBox="0 0 18 14"><use href="#cart"/></svg>
<svg class="ic" style="left:542.5px;top:302.5px" width="15" height="15" viewBox="0 0 15 15"><use href="#info"/></svg>
<div class="hl" style="left:503px;top:320px;width:702px"></div>
<div class="cl" style="left:666px;top:321px;color:#000">15</div>
<div class="cl" style="left:701px;top:321px;color:#000">199106160</div>
<div class="cl" style="left:785px;top:321px;color:#000">1</div>
<div class="cl" style="left:820px;top:321px;color:#000">199106160</div>
<div class="cl" style="left:904px;top:321px;color:#000;letter-spacing:-0.4px">PIPE CLIP</div>
<svg class="ic" style="left:508px;top:324px" width="12" height="12" viewBox="0 0 12 12"><use href="#gear"/></svg>
<svg class="ic" style="left:523px;top:322.5px" width="18" height="14" viewBox="0 0 18 14"><use href="#cart"/></svg>
<svg class="ic" style="left:542.5px;top:322.5px" width="15" height="15" viewBox="0 0 15 15"><use href="#info"/></svg>
<div class="hl" style="left:503px;top:340px;width:702px"></div>
<div class="cl" style="left:666px;top:341px;color:#000">16</div>
<div class="cl" style="left:701px;top:341px;color:#000">199106160</div>
<div class="cl" style="left:785px;top:341px;color:#000">1</div>
<div class="cl" style="left:820px;top:341px;color:#000">199106160</div>
<div class="cl" style="left:904px;top:341px;color:#000;letter-spacing:-0.4px">PIPE CLIP</div>
<svg class="ic" style="left:508px;top:344px" width="12" height="12" viewBox="0 0 12 12"><use href="#gear"/></svg>
<svg class="ic" style="left:523px;top:342.5px" width="18" height="14" viewBox="0 0 18 14"><use href="#cart"/></svg>
<svg class="ic" style="left:542.5px;top:342.5px" width="15" height="15" viewBox="0 0 15 15"><use href="#info"/></svg>
<div class="hl" style="left:503px;top:360px;width:702px"></div>
<div class="cl" style="left:666px;top:361px;color:#000">17</div>
<div class="cl" style="left:701px;top:361px;color:#000">2314H005</div>
<div class="cl" style="left:785px;top:361px;color:#000">1</div>
<div class="cl" style="left:820px;top:361px;color:#000">2314H005</div>
<div class="cl" style="left:904px;top:361px;color:#000;letter-spacing:-0.4px">SCREW</div>
<svg class="ic" style="left:508px;top:364px" width="12" height="12" viewBox="0 0 12 12"><use href="#gear"/></svg>
<svg class="ic" style="left:523px;top:362.5px" width="18" height="14" viewBox="0 0 18 14"><use href="#cart"/></svg>
<svg class="ic" style="left:542.5px;top:362.5px" width="15" height="15" viewBox="0 0 15 15"><use href="#info"/></svg>
<div class="hl" style="left:503px;top:380px;width:702px"></div>
<div class="cl" style="left:666px;top:381px;color:#000">18</div>
<div class="cl" style="left:701px;top:381px;color:#000">023100008</div>
<div class="cl" style="left:785px;top:381px;color:#000">1</div>
<div class="cl" style="left:820px;top:381px;color:#000">023100008</div>
<div class="cl" style="left:904px;top:381px;color:#000;letter-spacing:-0.4px">NUT</div>
<svg class="ic" style="left:508px;top:384px" width="12" height="12" viewBox="0 0 12 12"><use href="#gear"/></svg>
<svg class="ic" style="left:523px;top:382.5px" width="18" height="14" viewBox="0 0 18 14"><use href="#cart"/></svg>
<svg class="ic" style="left:542.5px;top:382.5px" width="15" height="15" viewBox="0 0 15 15"><use href="#info"/></svg>
<div class="hl" style="left:503px;top:400px;width:702px"></div>
<div class="vl" style="left:582px;top:41px;height:360px"></div>
<div class="vl" style="left:666px;top:41px;height:360px"></div>
<div class="vl" style="left:701px;top:41px;height:360px"></div>
<div class="vl" style="left:785px;top:41px;height:360px"></div>
<div class="vl" style="left:820px;top:41px;height:360px"></div>
<div class="vl" style="left:904px;top:41px;height:360px"></div>
<div class="vl" style="left:1039px;top:41px;height:360px"></div>
<div class="vl" style="left:1094px;top:41px;height:360px"></div>
<div class="vl" style="left:1146px;top:41px;height:360px"></div>
<svg class="ic" style="left:540px;top:358px" width="115" height="34" viewBox="540 358 115 34">
<rect x="552" y="362" width="100" height="27" fill="#fff" opacity="0.9"/><rect x="542" y="360.5" width="16" height="21" rx="6" fill="#fff" opacity="0.85"/>
<g fill="#3d6a9a">
<!-- ying -->
<rect x="554.2" y="366.8" width="27.4" height="2.4"/>
<rect x="560.2" y="365.2" width="2.7" height="5.5"/><rect x="573" y="365.2" width="3.5" height="5.5"/>
<rect x="556.4" y="372.3" width="22.5" height="2.4"/><rect x="556.4" y="372.5" width="3" height="7"/><rect x="575.6" y="372.5" width="3.3" height="7"/>
<rect x="566.7" y="370.7" width="3.2" height="9.5"/>
<rect x="554.2" y="378.7" width="27.6" height="2.5"/>
<path d="M565.5 380.5 L570 381 L557.5 387.8 L554 386.5 Z"/><path d="M566.5 381 L570.5 380.5 L581.5 386 L578 387.8 Z"/>
<!-- jin -->
<path d="M592.6 365.2 L610 365.2 L614.6 374.2 L587.9 374.2 Z"/>
<path d="M595.8 367.6 L607.2 367.6 L610.2 372.6 L592.6 372.6 Z" fill="#fff"/><rect x="589" y="372.6" width="24.8" height="1.6"/><rect x="589.6" y="376.3" width="24.2" height="2.6"/>
<rect x="599" y="374" width="4.6" height="11"/>
<path d="M590.8 379.8 L593 379.8 L595.3 383.8 L593 383.8 Z"/><path d="M609.4 379.8 L611.6 379.8 L609 383.8 L606.8 383.8 Z"/>
<rect x="587.9" y="383.8" width="27" height="2.9"/>
<!-- shi -->
<path d="M622.2 365.2 L631 365.2 L630.5 367.5 L625 373.5 L622 373.5 L627.5 367.6 L622.2 367.6 Z"/>
<path d="M627.5 370 L630.8 370 L630.8 386.7 L627.5 386.7 Z"/>
<path d="M628 377.5 L628 380.5 L621.5 383 L621.8 380.5 Z"/>
<rect x="630.3" y="368" width="2.5" height="15.8"/>
<path d="M633.8 365.8 L635.8 365.8 L635.8 383 L632.5 386.7 L631.5 386.7 L633.8 382.5 Z"/>
<rect x="637.3" y="365.2" width="11.7" height="2.1"/>
<rect x="637.3" y="369.9" width="11" height="2.3"/><rect x="637.3" y="369.9" width="2.3" height="13.9"/><rect x="645.4" y="369.9" width="2.9" height="13.9"/>
<rect x="640.8" y="367.3" width="2.3" height="19.4"/>
<!-- logo -->
<path d="M546 363.5 C547 361.8 551 362 552.2 363.5 L552.2 377.7 L546 375 C545.2 372 545 366 546 363.5 Z" fill="#2f79c4"/>
<ellipse cx="549" cy="369.5" rx="1.8" ry="1.4" fill="#a9c8e8"/>
</g>
</svg>
</body></html>
